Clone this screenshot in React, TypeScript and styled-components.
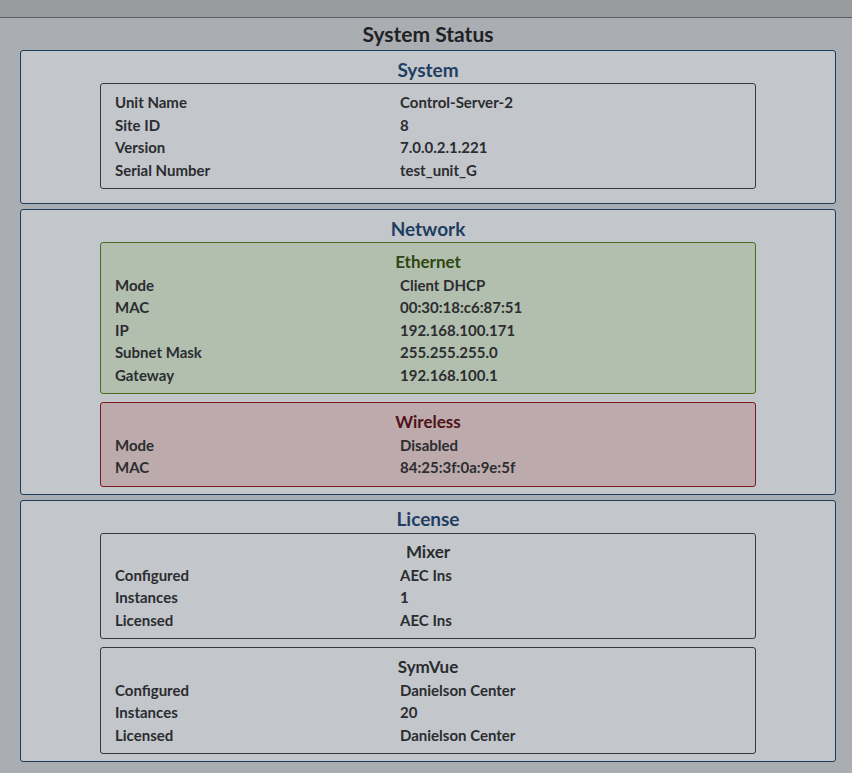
import React from "react";
import styled, { createGlobalStyle } from "styled-components";

const GlobalStyle = createGlobalStyle`
  html, body {
    margin: 0;
    padding: 0;
    background: #aaadb1;
    font-family: Lato, "Liberation Sans", sans-serif;
  }
`;

type Tone = "plain" | "ethernet" | "wireless";

const tones = {
  plain: { bg: "#c3c6cb", border: "#35373a", title: "#2a2c2f" },
  ethernet: { bg: "#b2bfae", border: "#4c6b1e", title: "#2f4712" },
  wireless: { bg: "#bcaaad", border: "#7b1b1f", title: "#4f1218" },
};

const TopBar = styled.div`
  height: 17px;
  background: #999c9f;
  border-bottom: 1px solid #5b5d60;
`;

const Page = styled.div`
  padding: 0 16px 0 20px;
  display: flex;
  flex-direction: column;
  gap: 5px;
`;

const Title = styled.h1`
  margin: 0;
  height: 27px;
  padding-top: 3px;
  box-sizing: border-box;
  display: flex;
  align-items: center;
  justify-content: center;
  font-size: 21px;
  font-weight: 700;
  color: #1f2124;
`;

const Panel = styled.section<{ $pb: number }>`
  background: #c3c6cb;
  border: 1px solid #1d3d5f;
  border-radius: 3px;
  padding: 0 79px ${(p) => p.$pb}px 79px;
  display: flex;
  flex-direction: column;
  gap: 8px;
`;

const PanelHeader = styled.h2`
  margin: 0 0 -8px;
  height: 32px;
  padding-top: 4px;
  box-sizing: border-box;
  display: flex;
  align-items: center;
  justify-content: center;
  font-size: 19px;
  font-weight: 700;
  color: #1e3e62;
`;

const Box = styled.div<{ $tone: Tone }>`
  background: ${(p) => tones[p.$tone].bg};
  border: 1px solid ${(p) => tones[p.$tone].border};
  border-radius: 3px;
  padding: 7px 14px 7px;
`;

const BoxTitle = styled.div<{ $tone: Tone }>`
  height: 24px;
  margin-top: -1px;
  display: flex;
  align-items: center;
  justify-content: center;
  font-size: 17px;
  font-weight: 700;
  color: ${(p) => tones[p.$tone].title};
`;

const Row = styled.div`
  display: grid;
  grid-template-columns: 285px 1fr;
  height: 22.6px;
  align-items: center;
  font-size: 15px;
  font-weight: 700;
  color: #2b2d30;
`;

type Item = [string, string];

function InfoBox({ title, tone = "plain", rows }: { title?: string; tone?: Tone; rows: Item[] }) {
  return (
    <Box $tone={tone}>
      {title && <BoxTitle $tone={tone}>{title}</BoxTitle>}
      {rows.map(([k, v]) => (
        <Row key={k}>
          <span>{k}</span>
          <span>{v}</span>
        </Row>
      ))}
    </Box>
  );
}

export default function App() {
  return (
    <>
      <GlobalStyle />
      <TopBar />
      <Page>
        <Title>System Status</Title>
        <Panel $pb={14}>
          <PanelHeader>System</PanelHeader>
          <InfoBox
            rows={[
              ["Unit Name", "Control-Server-2"],
              ["Site ID", "8"],
              ["Version", "7.0.0.2.1.221"],
              ["Serial Number", "test_unit_G"],
            ]}
          />
        </Panel>
        <Panel $pb={7}>
          <PanelHeader>Network</PanelHeader>
          <InfoBox
            title="Ethernet"
            tone="ethernet"
            rows={[
              ["Mode", "Client DHCP"],
              ["MAC", "00:30:18:c6:87:51"],
              ["IP", "192.168.100.171"],
              ["Subnet Mask", "255.255.255.0"],
              ["Gateway", "192.168.100.1"],
            ]}
          />
          <InfoBox
            title="Wireless"
            tone="wireless"
            rows={[
              ["Mode", "Disabled"],
              ["MAC", "84:25:3f:0a:9e:5f"],
            ]}
          />
        </Panel>
        <Panel $pb={7}>
          <PanelHeader>License</PanelHeader>
          <InfoBox
            title="Mixer"
            rows={[
              ["Configured", "AEC Ins"],
              ["Instances", "1"],
              ["Licensed", "AEC Ins"],
            ]}
          />
          <InfoBox
            title="SymVue"
            rows={[
              ["Configured", "Danielson Center"],
              ["Instances", "20"],
              ["Licensed", "Danielson Center"],
            ]}
          />
        </Panel>
      </Page>
    </>
  );
}
